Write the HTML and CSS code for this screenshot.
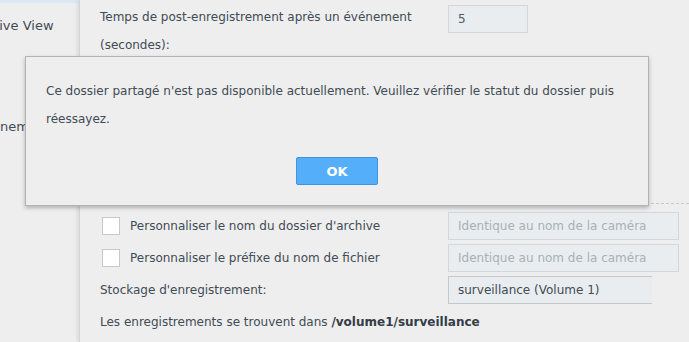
FILE: index.html
```html
<!DOCTYPE html>
<html lang="fr">
<head>
    <meta charset="UTF-8">
    <title>Paramètres d'enregistrement</title>
    <link rel="stylesheet" href="styles.css">
</head>
<body>
    <div class="app">
        <div class="sidebar">
            <div class="nav-item active"></div>
            <div class="nav-item live"><span>Live View</span></div>
            <div class="nav-item events"><span>Événements</span></div>
        </div>

        <div class="main">
            <div class="form-row tall">
                <label class="form-label">Temps de post-enregistrement après un événement (secondes):</label>
                <input type="text" class="field small" value="5">
            </div>

            <div class="hidden-rows"></div>

            <div class="separator"></div>

            <div class="form-row">
                <label class="form-label check"><span class="checkbox"></span>Personnaliser le nom du dossier d'archive</label>
                <input type="text" class="field" placeholder="Identique au nom de la caméra">
            </div>
            <div class="form-row">
                <label class="form-label check"><span class="checkbox"></span>Personnaliser le préfixe du nom de fichier</label>
                <input type="text" class="field" placeholder="Identique au nom de la caméra">
            </div>
            <div class="form-row">
                <label class="form-label">Stockage d'enregistrement:</label>
                <div class="select">surveillance (Volume 1)</div>
            </div>
            <div class="path-info">Les enregistrements se trouvent dans <b>/volume1/surveillance</b></div>
        </div>
    </div>

    <div class="dialog">
        <div class="dialog-text">Ce dossier partagé n'est pas disponible actuellement. Veuillez vérifier le statut du dossier puis réessayez.</div>
        <div class="dialog-buttons">
            <button class="btn-ok">OK</button>
        </div>
    </div>
</body>
</html>
```

FILE: styles.css
```css
body {
    margin: 0;
    background-color: #eeeeee;
    font-family: "DejaVu Sans", Verdana, sans-serif;
    font-size: 12px;
    color: #414b55;
    overflow: hidden;
}

.app {
    display: flex;
    height: 342px;
}

.sidebar {
    width: 79px;
    flex-shrink: 0;
    background-color: #eeeeee;
    overflow: hidden;
}

.nav-item {
    white-space: nowrap;
    line-height: 28px;
    font-size: 13px;
}

.nav-item.active {
    height: 3px;
    background-color: #dbe8f5;
}

.nav-item.live {
    margin-top: 9px;
}

.nav-item.live span {
    margin-left: -8px;
}

.nav-item.events {
    margin-top: 73px;
}

.nav-item.events span {
    margin-left: -24px;
}

.main {
    flex: 1;
    border-left: 1px solid #d4d4d4;
    box-shadow: -2px 0 3px rgba(0, 0, 0, 0.08);
    padding-left: 20px;
    padding-top: 3px;
}

.form-row {
    display: flex;
    align-items: center;
    height: 28px;
    margin-bottom: 4px;
}

.form-row.tall {
    align-items: flex-start;
    height: 56px;
    margin-bottom: 0;
}

.form-label {
    width: 348px;
    flex-shrink: 0;
    line-height: 28px;
    display: flex;
    align-items: center;
}

.form-row.tall .form-label {
    display: block;
    width: 330px;
    margin-right: 18px;
}

.form-label.check {
    padding-left: 2px;
    width: 346px;
}

.checkbox {
    width: 16px;
    height: 16px;
    border: 1px solid #c6c9cc;
    background-color: #ffffff;
    margin-right: 10px;
}

.field {
    box-sizing: border-box;
    width: 231px;
    height: 28px;
    padding: 0 9px;
    border: 1px solid #d3d7da;
    background-color: #e9edf0;
    font-family: inherit;
    font-size: 12px;
    color: #505a64;
    outline: none;
}

.field::placeholder {
    color: #a8b0b6;
}

.field.small {
    width: 80px;
    margin-top: 2px;
}

.hidden-rows {
    height: 144px;
}

.separator {
    border-top: 1px dashed #c8c8c8;
    margin-bottom: 8px;
}

.select {
    box-sizing: border-box;
    width: 204px;
    height: 28px;
    line-height: 26px;
    padding: 0 9px;
    border: 1px solid #c4c8cb;
    border-right: none;
    background-color: #e9edf0;
    color: #414b55;
}

.path-info {
    line-height: 28px;
    margin-top: 1px;
}

.path-info b {
    color: #333d47;
}

.dialog {
    position: absolute;
    left: 25px;
    top: 56px;
    width: 622px;
    height: 148px;
    background-color: #eeeeee;
    border: 1px solid #b3b3b3;
    box-shadow: 0 2px 4px rgba(0, 0, 0, 0.25);
}

.dialog-text {
    padding: 20px 20px 0 20px;
    line-height: 28px;
    height: 80px;
}

.dialog-buttons {
    display: flex;
    justify-content: center;
}

.btn-ok {
    width: 82px;
    height: 28px;
    border: 1px solid #3d95e2;
    border-radius: 2px;
    background-color: #55aefa;
    color: #ffffff;
    font-family: inherit;
    font-size: 13px;
    font-weight: bold;
}
```
